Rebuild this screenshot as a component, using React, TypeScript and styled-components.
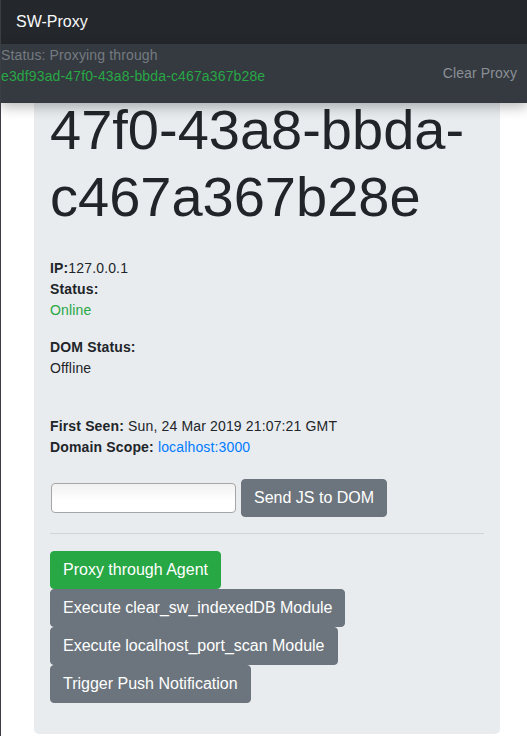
import React from "react";
import styled, { createGlobalStyle } from "styled-components";

const GlobalStyle = createGlobalStyle`
  html, body {
    margin: 0;
    padding: 0;
    background: #ffffff;
  }
  body {
    font-family: "Liberation Sans", Arial, sans-serif;
    color: #212529;
  }
  * { box-sizing: border-box; }
`;

const Page = styled.div`
  height: 736px;
  overflow: hidden;
  border-left: 1px solid #3b3e42;
  display: flex;
  flex-direction: column;
`;

const Navbar = styled.nav`
  flex: 0 0 44px;
  background: #24282c;
  display: flex;
  align-items: center;
  padding: 0 15px;
`;

const Brand = styled.span`
  color: #f8f9fa;
  font-size: 16px;
  line-height: 24px;
`;

const Main = styled.main`
  position: relative;
  flex: 1;
  padding: 20px 27px 0 33px;
`;

const StatusBar = styled.div`
  position: absolute;
  top: 0;
  left: 0;
  right: 0;
  z-index: 2;
  height: 59px;
  background: #343a40;
  display: flex;
  align-items: center;
  justify-content: space-between;
  padding: 0 10px 0 0;
  box-shadow: 0 4px 12px rgba(0, 0, 0, 0.28);
`;

const StatusText = styled.div`
  align-self: flex-start;
  padding-top: 1px;
  font-size: 14px;
  line-height: 21px;
  letter-spacing: 0.14px;
  color: #757b81;
`;

const ProxyId = styled.div`
  color: #28a745;
`;

const ClearButton = styled.button`
  border: none;
  background: transparent;
  padding: 0;
  font-family: inherit;
  font-size: 14px;
  line-height: 21px;
  letter-spacing: 0.1px;
  color: #8b9096;
  cursor: pointer;
`;

const Card = styled.section`
  background: #e9ecef;
  border-radius: 4.8px;
  padding: 32px 16px 31px;
`;

const Heading = styled.h1`
  margin: 0 0 28px;
  font-size: 56px;
  font-weight: 300;
  line-height: 1.2;
  color: #212529;
`;

const Group = styled.div<{ $after: number }>`
  margin-bottom: ${(p) => p.$after}px;
`;

const Line = styled.div<{ $tone?: "green" | "default" }>`
  font-size: 14px;
  line-height: 21px;
  letter-spacing: 0.15px;
  color: ${(p) => (p.$tone === "green" ? "#28a745" : "#212529")};
`;

const Label = styled.b`
  font-weight: 700;
`;

const Link = styled.a`
  color: #007bff;
  text-decoration: none;
`;

const SendRow = styled.div`
  display: flex;
  align-items: center;
  gap: 5px;
`;

const JsInput = styled.input`
  width: 185px;
  height: 30px;
  margin-left: 1px;
  border: 1px solid #a6a6a6;
  border-radius: 4px;
  background: linear-gradient(#f1f1f1, #ffffff 60%);
  padding: 2px 6px;
  font-family: inherit;
  font-size: 14px;
`;

const Button = styled.button<{ $variant?: "success" | "secondary" }>`
  display: inline-block;
  border: 1px solid
    ${(p) => (p.$variant === "success" ? "#28a745" : "#6c757d")};
  background: ${(p) => (p.$variant === "success" ? "#28a745" : "#6c757d")};
  color: #ffffff;
  font-family: inherit;
  font-size: 16px;
  line-height: 24px;
  padding: 6px 12px;
  border-radius: 4px;
  cursor: pointer;
  white-space: nowrap;
`;

const Divider = styled.hr`
  margin: 16px 0 17px;
  border: 0;
  border-top: 1px solid rgba(0, 0, 0, 0.1);
`;

const ActionStack = styled.div`
  display: flex;
  flex-direction: column;
  align-items: flex-start;
`;

export default function App() {
  return (
    <>
      <GlobalStyle />
      <Page>
        <Navbar>
          <Brand>SW-Proxy</Brand>
        </Navbar>
        <Main>
          <StatusBar>
            <StatusText>
              Status: Proxying through
              <ProxyId>e3df93ad-47f0-43a8-bbda-c467a367b28e</ProxyId>
            </StatusText>
            <ClearButton>Clear Proxy</ClearButton>
          </StatusBar>
          <Card>
            <Heading>47f0-43a8-bbda-c467a367b28e</Heading>
            <Group $after={16}>
              <Line>
                <Label>IP:</Label>127.0.0.1
              </Line>
              <Line>
                <Label>Status:</Label>
              </Line>
              <Line $tone="green">Online</Line>
            </Group>
            <Group $after={37}>
              <Line>
                <Label>DOM Status:</Label>
              </Line>
              <Line>Offline</Line>
            </Group>
            <Group $after={21}>
              <Line>
                <Label>First Seen:</Label> Sun, 24 Mar 2019 21:07:21 GMT
              </Line>
              <Line>
                <Label>Domain Scope:</Label>{" "}
                <Link href="#">localhost:3000</Link>
              </Line>
            </Group>
            <SendRow>
              <JsInput type="text" />
              <Button $variant="secondary">Send JS to DOM</Button>
            </SendRow>
            <Divider />
            <ActionStack>
              <Button $variant="success">Proxy through Agent</Button>
              <Button $variant="secondary">
                Execute clear_sw_indexedDB Module
              </Button>
              <Button $variant="secondary">
                Execute localhost_port_scan Module
              </Button>
              <Button $variant="secondary">Trigger Push Notification</Button>
            </ActionStack>
          </Card>
        </Main>
      </Page>
    </>
  );
}
